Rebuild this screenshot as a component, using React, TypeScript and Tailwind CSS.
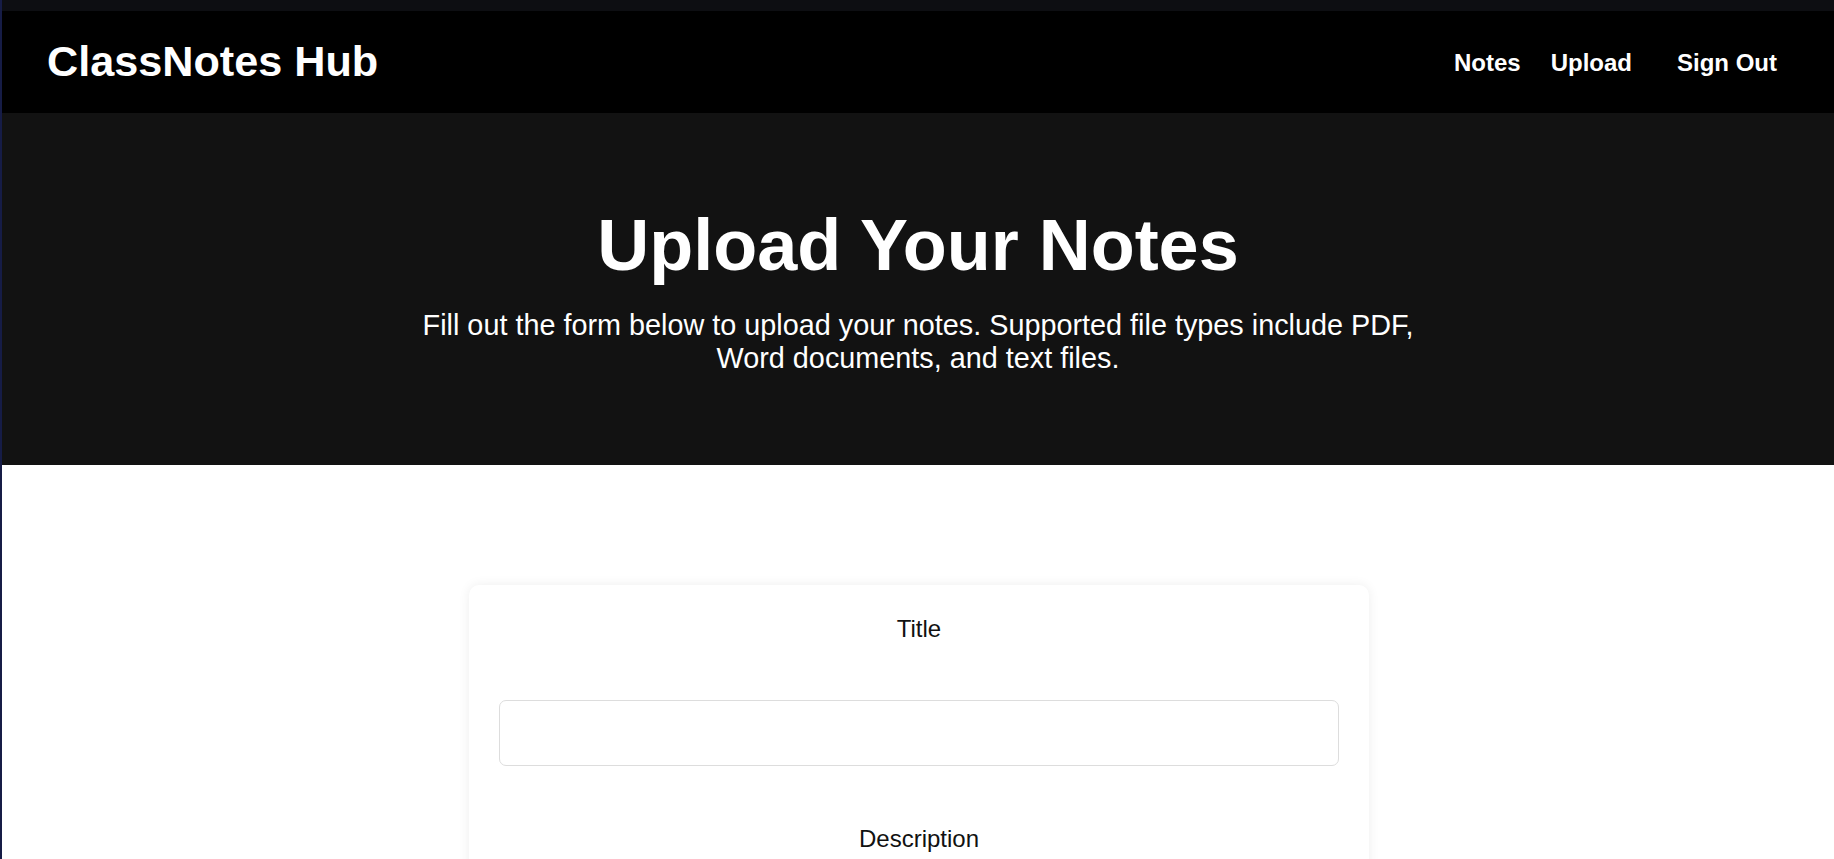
import React from "react";

export default function App() {
  const font = { fontFamily: '"Liberation Sans", Arial, sans-serif' };
  return (
    <div
      className="min-h-screen bg-white border-l-2 border-[#161c46]"
      style={font}
    >
      <div className="h-[11px] bg-[#0d0e12]" />
      <header className="h-[102px] bg-black flex items-center justify-between pl-[45px] pr-[57px]">
        <div className="text-white font-bold text-[43.2px] leading-[1.15]">
          ClassNotes Hub
        </div>
        <nav className="flex items-center text-white font-bold text-[24px] leading-[1.15] pt-[1px]">
          <a className="text-white">Notes</a>
          <a className="text-white ml-[30px]">Upload</a>
          <button className="text-white font-bold ml-[45px]">Sign Out</button>
        </nav>
      </header>
      <section className="bg-[#121212] pt-[91px] pb-[90px] flex flex-col items-center text-center text-white">
        <h1 className="font-bold text-[72px] leading-[1.15] mb-[22px]">
          Upload Your Notes
        </h1>
        <p className="text-[28.8px] leading-[1.15] max-w-[1020px]">
          Fill out the form below to upload your notes. Supported file types
          include PDF, Word documents, and text files.
        </p>
      </section>
      <main className="flex justify-center pt-[120px] pb-[80px] pl-[2px]">
        <form className="w-[900px] bg-white rounded-[10px] shadow-[0_0_12px_rgba(0,0,0,0.07)] px-[30px] pt-[30px] pb-[30px] flex flex-col">
          <label className="block text-center text-[24px] leading-[1.15] text-[#111]">
            Title
          </label>
          <input
            type="text"
            className="mt-[57px] h-[66px] w-full border border-[#dddddd] rounded-[7px] px-4 text-[18px] outline-none"
          />
          <label className="block text-center text-[24px] leading-[1.15] text-[#111] mt-[59px]">
            Description
          </label>
          <textarea className="mt-[57px] h-[160px] w-full border border-[#dddddd] rounded-[7px] p-4 text-[18px] outline-none resize-none" />
          <label className="block text-center text-[24px] leading-[1.15] text-[#111] mt-[59px]">
            File
          </label>
          <input
            type="file"
            className="mt-[30px] w-full border border-[#dddddd] rounded-[7px] p-4 text-[18px]"
          />
          <button
            type="button"
            className="mt-[40px] h-[56px] bg-black text-white font-bold text-[20px] rounded-[7px]"
          >
            Upload
          </button>
        </form>
      </main>
    </div>
  );
}
